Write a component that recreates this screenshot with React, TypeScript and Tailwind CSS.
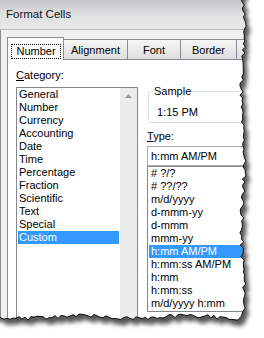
const categories = [
  "General",
  "Number",
  "Currency",
  "Accounting",
  "Date",
  "Time",
  "Percentage",
  "Fraction",
  "Scientific",
  "Text",
  "Special",
  "Custom",
];

const types = [
  "# ?/?",
  "# ??/??",
  "m/d/yyyy",
  "d-mmm-yy",
  "d-mmm",
  "mmm-yy",
  "h:mm AM/PM",
  "h:mm:ss AM/PM",
  "h:mm",
  "h:mm:ss",
  "m/d/yyyy h:mm",
];

// jagged "torn paper" edge along the right and bottom of the screenshot
function tornEdge() {
  let seed = 11;
  const rnd = () => {
    seed = (seed * 9301 + 49297) % 233280;
    return seed / 233280;
  };
  const pts: [number, number][] = [];
  for (let y = -10; y <= 315; y += 3) {
    pts.push([243 + (rnd() - 0.5) * 4 + Math.sin(y / 21) * 1.5, y]);
  }
  for (let x = 241; x >= -10; x -= 3) {
    pts.push([x, 317 + (rnd() - 0.5) * 4 + Math.sin(x / 17) * 1.2]);
  }
  const line = pts.map((p, i) => `${i ? "L" : "M"} ${p[0].toFixed(1)} ${p[1].toFixed(1)}`).join(" ");
  return { line, shape: `M -10 -10 ${line.replace(/^M/, "L")} Z` };
}

function TornOverlay() {
  const { line, shape } = tornEdge();
  return (
    <svg className="pointer-events-none absolute inset-0" width={264} height={338}>
      <defs>
        <filter id="blur" x="-20%" y="-20%" width="140%" height="140%">
          <feGaussianBlur stdDeviation="2.2" />
        </filter>
        <mask id="outside">
          <rect x={0} y={0} width={264} height={338} fill="white" />
          <path d={shape} fill="black" />
        </mask>
      </defs>
      <g mask="url(#outside)">
        <rect x={0} y={0} width={264} height={338} fill="white" />
        <path d={shape} transform="translate(4 6)" fill="#3a3a3a" opacity={0.85} filter="url(#blur)" />
      </g>
      <path d={line} fill="none" stroke="#111" strokeWidth={1} />
    </svg>
  );
}

function Tab({ label, w }: { label: string; w: string }) {
  return (
    <div
      className={`${w} flex h-[20px] items-center justify-center border border-b-0 border-l-0 border-[#898c95] bg-gradient-to-b from-[#f6f6f6] to-[#dedede] pt-[2px]`}
    >
      {label}
    </div>
  );
}

export default function App() {
  return (
    <div className="relative h-[338px] w-[264px] overflow-hidden bg-white font-['Liberation_Sans',Arial,sans-serif] text-[11px] leading-[13px] text-black">
      <div className="flex h-[330px] w-[262px] flex-col">
        {/* title bar */}
        <div className="flex h-[30px] shrink-0 items-center border-b border-[#b9b9b9] bg-gradient-to-b from-[#c4c6c8] via-[#dfe0e1] to-[#e8e8e8] pl-[6px] text-[11.5px] text-[#111]">
          Format Cells
        </div>

        <div className="flex flex-1 bg-[#f0f0f0]">
          <div className="w-[3px] border-l border-[#8c8c8c] bg-[#e2e2e2]" />
          <div className="w-px bg-[#a2a2a2]" />

          <div className="flex flex-1 flex-col pl-[6px] pt-[7px]">
            {/* tabs */}
            <div className="flex h-[22px] items-end">
              <div className="relative z-10 -mb-px flex h-[23px] w-[57px] justify-center border border-b-0 border-[#898c95] bg-white pl-px pt-[6px]">
                <span className="h-[15px] w-[50px] border border-dotted border-black text-center leading-[13px]">
                  Number
                </span>
              </div>
              <Tab label="Alignment" w="w-[64px]" />
              <Tab label="Font" w="w-[53px]" />
              <Tab label="Border" w="w-[56px]" />
              <Tab label="Fill" w="w-[40px]" />
            </div>

            {/* tab page */}
            <div className="flex flex-1 border-l border-t border-[#898c95] bg-white pl-[8px] pt-[9px]">
              <div className="flex w-[122px] shrink-0 flex-col">
                <div className="h-[13px]">
                  <span className="underline">C</span>ategory:
                </div>
                <div className="mt-[5px] flex h-[240px] border border-[#828790]">
                  <div className="flex-1 px-px">
                    {categories.map((c) => (
                      <div
                        key={c}
                        className={`h-[13px] pl-px ${c === "Custom" ? "bg-[#3399ff] text-white" : ""}`}
                      >
                        {c}
                      </div>
                    ))}
                  </div>
                  <div className="flex w-[17px] justify-center bg-[#ececec] pt-[6px]">
                    <svg width="7" height="4" viewBox="0 0 7 4">
                      <path d="M0 4 L3.5 0 L7 4 Z" fill="#9a9a9a" />
                    </svg>
                  </div>
                </div>
              </div>

              <div className="ml-[9px] flex flex-1 flex-col">
                <div className="relative ml-px mt-[22px] h-[32px] rounded-[3px] border border-[#d5dfe5] pl-[8px] pt-[14px]">
                  <span className="absolute left-[4px] top-[-7px] bg-white px-px">Sample</span>
                  1:15 PM
                </div>
                <div className="mt-[7px] h-[13px]">
                  <span className="underline">T</span>ype:
                </div>
                <div className="mt-[3px] flex h-[20px] items-center border border-[#abadb3] pl-[3px]">
                  h:mm AM/PM
                </div>
                <div className="h-[146px] border border-[#828790] pl-px">
                  {types.map((t) => (
                    <div
                      key={t}
                      className={`h-[13px] pl-[2px] ${t === "h:mm AM/PM" ? "bg-[#3399ff] text-white" : ""}`}
                    >
                      {t}
                    </div>
                  ))}
                </div>
              </div>
            </div>
          </div>
        </div>
      </div>
      <TornOverlay />
    </div>
  );
}
